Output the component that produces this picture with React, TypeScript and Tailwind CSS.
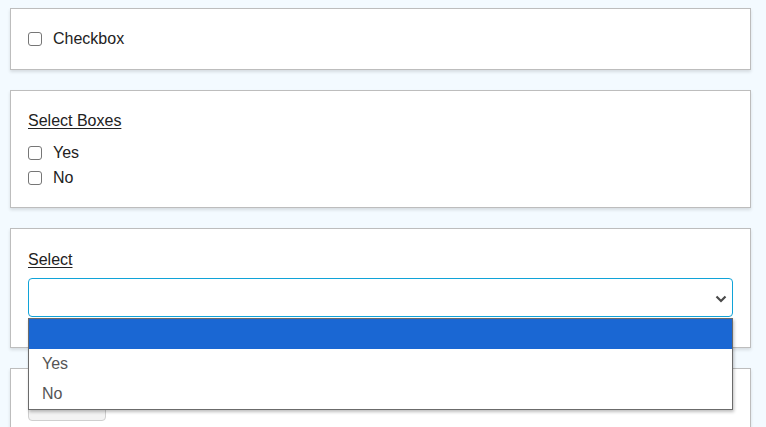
import React from "react";

function Box() {
  return (
    <span className="inline-block h-[14px] w-[14px] shrink-0 rounded-[3px] border border-[#767676] bg-white" />
  );
}

function CheckRow({ label, h = "h-[23px]" }: { label: string; h?: string }) {
  return (
    <label className={`flex items-center gap-[11px] ${h}`}>
      <Box />
      <span>{label}</span>
    </label>
  );
}

const panel =
  "border border-[#bdbdbd] bg-white shadow-[0_2px_3px_rgba(0,0,0,0.12)]";

export default function App() {
  return (
    <div
      className="relative h-[427px] w-[766px] overflow-hidden bg-[#f3faff] px-[10px] pt-[8px] text-[16px] text-[#222]"
      style={{ fontFamily: '"Liberation Sans", Arial, sans-serif' }}
    >
      <div className="flex w-[741px] flex-col gap-[20px]">
        <section className={`${panel} px-[17px] pb-[19px] pt-[18px]`}>
          <CheckRow label="Checkbox" />
        </section>

        <section className={`${panel} px-[17px] pb-[17px] pt-[18px]`}>
          <p className="mb-[7px] h-[24px] leading-[24px] underline underline-offset-[2px]">
            Select Boxes
          </p>
          <CheckRow label="Yes" h="h-[25px]" />
          <CheckRow label="No" h="h-[25px]" />
        </section>

        <section className={`${panel} px-[17px] pb-[30px] pt-[19px]`}>
          <p className="mb-[6px] h-[24px] leading-[24px] underline underline-offset-[2px]">
            Select
          </p>
          <div className="relative">
            <div className="flex h-[39px] w-[705px] items-center justify-end rounded-[4px] border border-[#10a3d8] bg-white pr-[5px]">
              <svg width="12" height="8" viewBox="0 0 12 8" className="mt-[2px]">
                <path d="M1.5 1.5 L6 6 L10.5 1.5" fill="none" stroke="#4a4a4a" strokeWidth="2.2" />
              </svg>
            </div>
            <ul className="absolute left-0 top-[40px] z-10 w-[705px] border border-[#6b6b6b] bg-white text-[#555] shadow-[1px_2px_3px_rgba(0,0,0,0.25)]">
              <li className="h-[30px] bg-[#1a67d3]" />
              <li className="flex h-[30px] items-center pl-[13px]">Yes</li>
              <li className="flex h-[30px] items-center pl-[13px]">No</li>
            </ul>
          </div>
        </section>

        <section className={`${panel} h-[80px] px-[17px] pt-[22px]`}>
          <button className="h-[30px] w-[78px] rounded-[4px] border border-[#cfcfcf] bg-[#f3f3f3]" />
        </section>
      </div>
    </div>
  );
}
